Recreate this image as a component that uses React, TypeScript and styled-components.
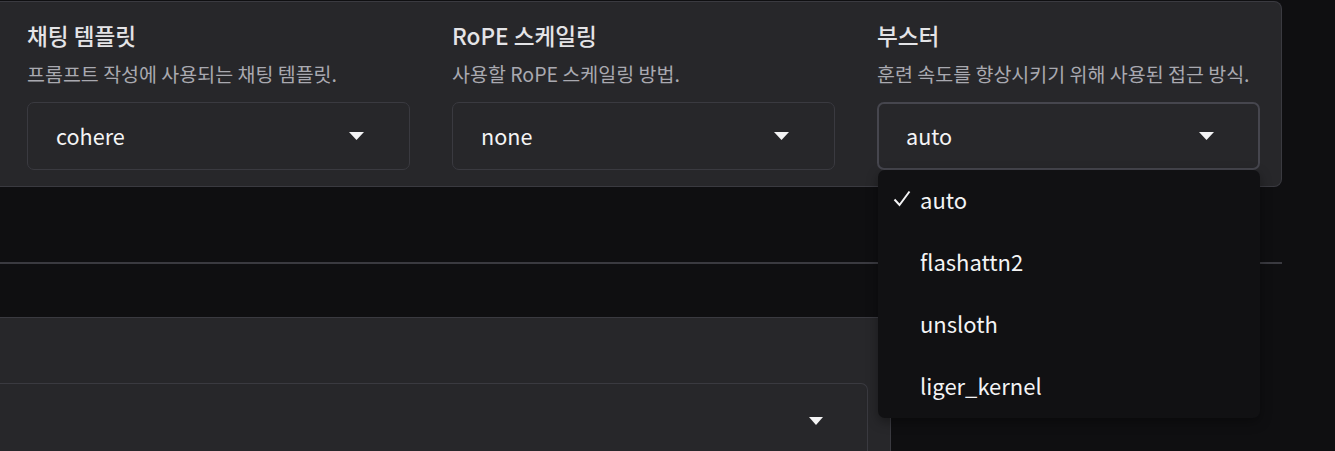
import React from "react";
import styled, { createGlobalStyle } from "styled-components";

const Global = createGlobalStyle`
  html, body { margin: 0; padding: 0; background: #0f0f11; }
  body { font-family: "Noto Sans CJK KR", "Noto Sans", sans-serif; }
  * { box-sizing: border-box; }
`;

const Page = styled.div`
  width: 1335px;
  height: 451px;
  overflow: hidden;
  background: #0f0f11;
  padding-top: 1px;
  display: flex;
  flex-direction: column;
`;

const TopPanel = styled.div`
  width: 1282px;
  background: #27272a;
  border: 1px solid #3a3a40;
  border-left: none;
  border-bottom-right-radius: 8px;
  border-top-right-radius: 8px;
  padding: 19px 20px 16px 27px;
  display: grid;
  grid-template-columns: repeat(3, 383px);
  column-gap: 42px;
`;

const Field = styled.div`
  display: flex;
  flex-direction: column;
  position: relative;
`;

const Title = styled.div`
  color: #e4e4e7;
  font-size: 22.6px;
  font-weight: 500;
  line-height: 30px;
`;

const Desc = styled.div`
  color: #a9a9b0;
  font-size: 19.5px;
  line-height: 26px;
  margin-top: 10px;
  margin-bottom: 15px;
`;

const Select = styled.div<{ $focused?: boolean }>`
  height: 68px;
  border-radius: 7px;
  border: ${(p) => (p.$focused ? "2px solid #46464e" : "1px solid #3a3a40")};
  display: flex;
  align-items: center;
  justify-content: space-between;
  padding: 0 ${(p) => (p.$focused ? "44px 0 27px" : "45px 0 28px")};
  color: #f4f4f5;
  font-size: 21.6px;
  line-height: 28px;
  background: #27272a;
`;

const Caret = () => (
  <svg width="15" height="8" viewBox="0 0 15 8">
    <path d="M0 0 L15 0 L7.5 8 Z" fill="#f4f4f5" />
  </svg>
);

const Menu = styled.div`
  position: absolute;
  left: 1px;
  top: 100%;
  margin-top: 0;
  width: 382px;
  background: #111113;
  border-radius: 7px;
  box-shadow: 0 4px 12px rgba(0, 0, 0, 0.35);
  display: flex;
  flex-direction: column;
  z-index: 5;
`;

const Item = styled.div`
  height: 62px;
  display: flex;
  align-items: center;
  padding: 0 0 5px 15px;
  color: #f4f4f5;
  font-size: 22px;
`;

const CheckSlot = styled.span`
  width: 27px;
  display: inline-flex;
  align-items: center;
`;

const Check = () => (
  <svg width="18" height="17" viewBox="0 0 18 17">
    <path d="M1.5 9.5 L6.5 15 L16.5 1.5" fill="none" stroke="#f4f4f5" strokeWidth="2" />
  </svg>
);

const Gap = styled.div<{ $h: number }>`
  height: ${(p) => p.$h}px;
  flex: none;
`;

const Divider = styled.div`
  width: 1282px;
  height: 2px;
  background: #3a3a40;
  flex: none;
`;

const LowerPanel = styled.div`
  width: 891px;
  flex: 1;
  background: #27272a;
  border-top: 1px solid #3a3a40;
  border-right: 1px solid #3a3a40;
  padding: 65px 22px 0 0;
`;

const WideSelect = styled.div`
  height: 80px;
  border: 1px solid #3a3a40;
  border-left: none;
  border-bottom: none;
  border-top-right-radius: 7px;
  display: flex;
  justify-content: flex-end;
  padding: 33px 44px 0 0;
`;

const SmallCaret = () => (
  <svg width="14" height="8" viewBox="0 0 14 8">
    <path d="M0 0 L14 0 L7 8 Z" fill="#f4f4f5" />
  </svg>
);

const fields = [
  { title: "채팅 템플릿", desc: "프롬프트 작성에 사용되는 채팅 템플릿.", value: "cohere" },
  { title: "RoPE 스케일링", desc: "사용할 RoPE 스케일링 방법.", value: "none" },
  { title: "부스터", desc: "훈련 속도를 향상시키기 위해 사용된 접근 방식.", value: "auto", open: true },
];

const options = ["auto", "flashattn2", "unsloth", "liger_kernel"];

export default function App() {
  return (
    <>
      <Global />
      <Page>
        <TopPanel>
          {fields.map((f) => (
            <Field key={f.title}>
              <Title>{f.title}</Title>
              <Desc>{f.desc}</Desc>
              <Select $focused={f.open}>
                <span>{f.value}</span>
                <Caret />
              </Select>
              {f.open && (
                <Menu>
                  {options.map((o) => (
                    <Item key={o}>
                      <CheckSlot>{o === f.value && <Check />}</CheckSlot>
                      {o}
                    </Item>
                  ))}
                </Menu>
              )}
            </Field>
          ))}
        </TopPanel>
        <Gap $h={75} />
        <Divider />
        <Gap $h={53} />
        <LowerPanel>
          <WideSelect>
            <SmallCaret />
          </WideSelect>
        </LowerPanel>
      </Page>
    </>
  );
}
